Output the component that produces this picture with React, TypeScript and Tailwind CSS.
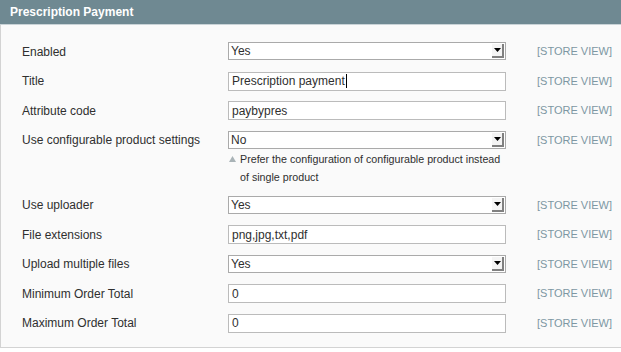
import React from 'react';

type Field = {
  label: string;
  kind: 'select' | 'text';
  value: string;
  note?: string[];
  caret?: boolean;
};

const fields: Field[] = [
  { label: 'Enabled', kind: 'select', value: 'Yes' },
  { label: 'Title', kind: 'text', value: 'Prescription payment', caret: true },
  { label: 'Attribute code', kind: 'text', value: 'paybypres' },
  {
    label: 'Use configurable product settings',
    kind: 'select',
    value: 'No',
    note: ['Prefer the configuration of configurable product instead', 'of single product'],
  },
  { label: 'Use uploader', kind: 'select', value: 'Yes' },
  { label: 'File extensions', kind: 'text', value: 'png,jpg,txt,pdf' },
  { label: 'Upload multiple files', kind: 'select', value: 'Yes' },
  { label: 'Minimum Order Total', kind: 'text', value: '0' },
  { label: 'Maximum Order Total', kind: 'text', value: '0' },
];

const SelectBox = ({ value }: { value: string }) => (
  <div className="flex h-[18px] w-[278px] items-center border border-[#aaaaaa] bg-white pl-[2px]">
    <span className="flex-1 text-[12px] leading-none text-[#2f2f2f]">{value}</span>
    <div className="mr-[1px] flex h-[14px] w-[12px] items-center justify-center border-r-2 border-b-2 border-[#808080] bg-[#f4f4f4]">
      <svg width="7" height="4" viewBox="0 0 7 4">
        <path d="M0 0h7L3.5 4z" fill="#000" />
      </svg>
    </div>
  </div>
);

const TextBox = ({ value, caret }: { value: string; caret?: boolean }) => (
  <div className="flex h-[19px] w-[278px] items-center border border-[#bbbbbb] bg-white pl-[3px]">
    <span className="text-[12px] leading-none text-[#2f2f2f]">{value}</span>
    {caret && <span className="ml-[1px] h-[14px] w-px bg-black" />}
  </div>
);

const Row = ({ field }: { field: Field }) => (
  <div className={`flex items-start ${field.note ? 'h-[65px]' : 'h-[29.5px]'}`}>
    <div className="flex h-[19px] w-[227px] items-center pl-[21px] text-[12px] text-[#2f2f2f]">
      {field.label}
    </div>
    <div className="w-[278px]">
      {field.kind === 'select' ? (
        <SelectBox value={field.value} />
      ) : (
        <TextBox value={field.value} caret={field.caret} />
      )}
      {field.note && (
        <div className="relative mt-[1px] w-[300px] whitespace-nowrap pl-[12px] text-[10.7px] leading-[18px] text-[#2f2f2f]">
          <svg className="absolute left-[1px] top-[6px]" width="7" height="6" viewBox="0 0 7 6">
            <path d="M3.5 0L7 6H0z" fill="#a9b3b7" />
          </svg>
          {field.note[0]}
          <br />
          {field.note[1]}
        </div>
      )}
    </div>
    <div className="flex h-[19px] items-center pl-[31px] text-[11px] text-[#7d97a3]">[STORE VIEW]</div>
  </div>
);

export default function App() {
  return (
    <div className="h-[352px] w-[621px] bg-white font-['Liberation_Sans',Arial,sans-serif]">
      <div className="flex h-[24px] items-center bg-[#6f8992] pl-[10px] text-[12px] font-bold text-white">
        Prescription Payment
      </div>
      <div className="h-px bg-[#c9d3d7]" />
      <div className="h-[323px] border-b border-l border-[#d3d3d3] bg-[#fafafa] pt-[17px]">
        {fields.map((f) => (
          <Row key={f.label} field={f} />
        ))}
      </div>
    </div>
  );
}
